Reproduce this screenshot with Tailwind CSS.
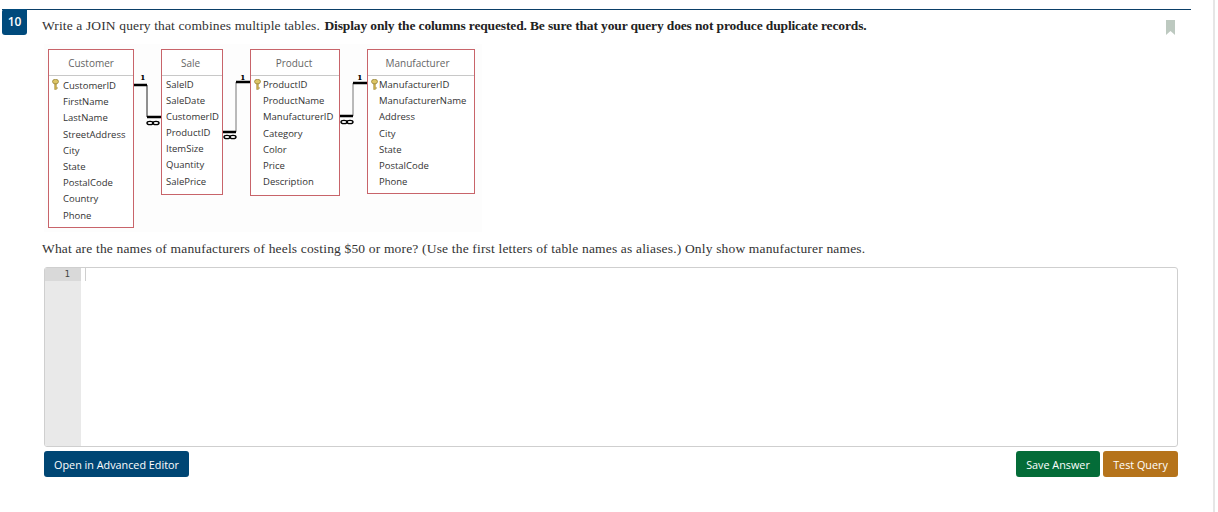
<!DOCTYPE html>
<html lang="en">
<head>
  <meta charset="UTF-8" />
  <title>Question 10</title>
  <script src="https://cdn.jsdelivr.net/npm/@tailwindcss/browser@4"></script>
</head>
<body class="bg-white overflow-hidden">
  <div class="w-[1215px] h-[512px] border-r-2 border-[#e6e6e6] pt-[9px] pl-[2px]">
    <!-- question -->
    <div class="flex w-[1189px] border-t border-[#0b3f68]">
      <div class="w-[25px] h-[26px] -mt-px bg-[#004a7c] rounded-b-[3px] rounded-tl-[3px] text-white text-[12px] font-semibold flex items-center justify-center font-['Open_Sans',sans-serif]">10</div>
      <div class="flex-1 pl-[15px] pr-[16px] pt-[8px] flex justify-between">
        <p class="font-['Liberation_Serif',serif] text-[13.5px] leading-[16px] text-[#333] tracking-[0.13px]">Write a JOIN query that combines multiple tables. <b class="font-bold text-[#222] ml-[1px] tracking-[-0.14px]">Display only the columns requested. Be sure that your query does not produce duplicate records.</b></p>
        <svg class="mt-[2px]" width="9" height="15" viewBox="0 0 9 15"><path d="M0 0H9V15L4.5 11L0 15Z" fill="#bdc9c0"/></svg>
      </div>
    </div>

    <div class="pl-[40px]">
      <!-- diagram -->
      <div class="relative mt-[9px] ml-[2px] w-[438px] h-[188px] bg-[#fdfdfd] font-['Open_Sans',sans-serif] text-[9.5px] text-[#333]">
        <!-- relationship lines -->
        <svg class="absolute inset-0" width="438" height="188" viewBox="0 0 438 188" fill="none">
          <path d="M89 41H103V73H117" stroke="#222" stroke-width="1"/>
          <path d="M89 41H103M103 73H117" stroke="#000" stroke-width="2.5"/>
          <path d="M178 88H192V38H206" stroke="#777" stroke-width="1"/>
          <path d="M178 88H192M192 38H206" stroke="#000" stroke-width="2.5"/>
          <path d="M295 72H309V39H323" stroke="#777" stroke-width="1"/>
          <path d="M295 72H309M309 39H323" stroke="#000" stroke-width="2.5"/>
          <g stroke="#000" stroke-width="1.4">
            <ellipse cx="106" cy="79" rx="3" ry="1.600"/><ellipse cx="112" cy="79" rx="3" ry="1.600"/>
            <ellipse cx="183" cy="93" rx="3" ry="1.600"/><ellipse cx="189" cy="93" rx="3" ry="1.600"/>
            <ellipse cx="300" cy="78" rx="3" ry="1.600"/><ellipse cx="306" cy="78" rx="3" ry="1.600"/>
          </g>
        </svg>
        <span class="absolute left-[96px] top-[28px] text-[8px] leading-[10px] font-bold text-black font-['DejaVu_Serif',serif]">1</span>
        <span class="absolute left-[196px] top-[28px] text-[8px] leading-[10px] font-bold text-black font-['DejaVu_Serif',serif]">1</span>
        <span class="absolute left-[313px] top-[28px] text-[8px] leading-[10px] font-bold text-black font-['DejaVu_Serif',serif]">1</span>

        <!-- Customer -->
        <div class="absolute left-[4px] top-[5px] w-[86px] h-[179px] bg-white border border-[#c8646a]">
          <div class="h-[26px] pt-[2px] flex items-center justify-center text-[10px] text-[#666] border-b border-[#c8c8c8]">Customer</div>
          <div class="relative pl-[14px] pt-[2px] leading-[16.2px]">
            <svg class="absolute left-[3px] top-[3px]" width="7" height="11" viewBox="0 0 7 11"><ellipse cx="3.500" cy="2.600" rx="3" ry="2.300" fill="#dcc565" stroke="#8d7a30" stroke-width=".7"/><path d="M2.600 5V10.500H4.400V9.500H5.400V8.400H4.400V5Z" fill="#d0b24a" stroke="#8d7a30" stroke-width=".4"/></svg>
            <div>CustomerID</div><div>FirstName</div><div>LastName</div><div>StreetAddress</div><div>City</div><div>State</div><div>PostalCode</div><div>Country</div><div>Phone</div>
          </div>
        </div>

        <!-- Sale -->
        <div class="absolute left-[117px] top-[5px] w-[62px] h-[146px] bg-white border border-[#c8646a]">
          <div class="h-[26px] pt-[2px] pr-[3px] flex items-center justify-center text-[10px] text-[#666] border-b border-[#c8c8c8]">Sale</div>
          <div class="pl-[4px] pt-[1px] leading-[16.1px]">
            <div>SaleID</div><div>SaleDate</div><div>CustomerID</div><div>ProductID</div><div>ItemSize</div><div>Quantity</div><div>SalePrice</div>
          </div>
        </div>

        <!-- Product -->
        <div class="absolute left-[206px] top-[5px] w-[90px] h-[147px] bg-white border border-[#c8646a]">
          <div class="h-[26px] pt-[2px] pr-[2px] flex items-center justify-center text-[10px] text-[#666] border-b border-[#c8c8c8]">Product</div>
          <div class="relative pl-[12px] pt-[1px] leading-[16.2px]">
            <svg class="absolute left-[3px] top-[3px]" width="7" height="11" viewBox="0 0 7 11"><ellipse cx="3.500" cy="2.600" rx="3" ry="2.300" fill="#dcc565" stroke="#8d7a30" stroke-width=".7"/><path d="M2.600 5V10.500H4.400V9.500H5.400V8.400H4.400V5Z" fill="#d0b24a" stroke="#8d7a30" stroke-width=".4"/></svg>
            <div>ProductID</div><div>ProductName</div><div>ManufacturerID</div><div>Category</div><div>Color</div><div>Price</div><div>Description</div>
          </div>
        </div>

        <!-- Manufacturer -->
        <div class="absolute left-[323px] top-[5px] w-[108px] h-[145px] bg-white border border-[#c8646a]">
          <div class="h-[26px] pt-[2px] pr-[7px] flex items-center justify-center text-[10px] text-[#666] border-b border-[#c8c8c8]">Manufacturer</div>
          <div class="relative pl-[11px] pt-[1px] leading-[16.2px]">
            <svg class="absolute left-[3px] top-[3px]" width="7" height="11" viewBox="0 0 7 11"><ellipse cx="3.500" cy="2.600" rx="3" ry="2.300" fill="#dcc565" stroke="#8d7a30" stroke-width=".7"/><path d="M2.600 5V10.500H4.400V9.500H5.400V8.400H4.400V5Z" fill="#d0b24a" stroke="#8d7a30" stroke-width=".4"/></svg>
            <div>ManufacturerID</div><div>ManufacturerName</div><div>Address</div><div>City</div><div>State</div><div>PostalCode</div><div>Phone</div>
          </div>
        </div>
      </div>

      <p class="mt-[9px] font-['Liberation_Serif',serif] text-[13.5px] leading-[16px] text-[#333] tracking-[0.17px]">What are the names of manufacturers of heels costing $50 or more? (Use the first letters of table names as aliases.) Only show manufacturer names.</p>

      <!-- editor -->
      <div class="mt-[10px] ml-[2px] w-[1134px] h-[180px] border border-[#cfcfcf] rounded-[3px] flex overflow-hidden">
        <div class="w-[36px] bg-[#e9e9e9]">
          <div class="h-[13px] bg-[#d9d9d9] pr-[11px] text-right font-['DejaVu_Sans_Mono',monospace] text-[9px] leading-[13px] text-[#444]">1</div>
        </div>
        <div class="flex-1 pl-[4px]"><div class="w-px h-[13px] bg-[#cfcfcf]"></div></div>
      </div>

      <!-- buttons -->
      <div class="mt-[4px] ml-[2px] w-[1134px] flex font-['Open_Sans',sans-serif] text-[10.8px] text-white">
        <button class="w-[145px] h-[26px] pt-[2px] bg-[#004674] rounded-[3px]">Open in Advanced Editor</button>
        <div class="flex-1"></div>
        <button class="w-[84px] h-[26px] pt-[2px] bg-[#046c38] rounded-[3px]">Save Answer</button>
        <button class="ml-[3px] w-[75px] h-[26px] pt-[2px] bg-[#b5731b] rounded-[3px]">Test Query</button>
      </div>
    </div>
  </div>
</body>
</html>
